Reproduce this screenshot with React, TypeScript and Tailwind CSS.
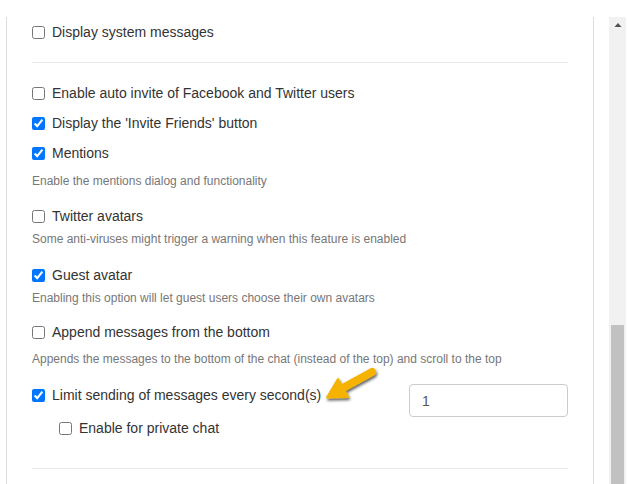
import React from "react";

function Check({ label, checked = false, className = "" }: { label: string; checked?: boolean; className?: string }) {
  return (
    <label className={`flex h-[20px] items-center gap-[7px] text-[14px] text-[#333] ${className}`}>
      <input type="checkbox" defaultChecked={checked} className="m-0 h-[13px] w-[13px] accent-[#0075ff]" />
      <span>{label}</span>
    </label>
  );
}

function Desc({ children, className = "" }: { children: React.ReactNode; className?: string }) {
  return <p className={`h-[16px] text-[12px] leading-[16px] text-[#777] ${className}`}>{children}</p>;
}

function Arrow() {
  return (
    <svg className="absolute left-[320px] top-[360px]" width="64" height="48" viewBox="0 0 64 48">
      <defs>
        <filter id="sh" x="-30%" y="-30%" width="160%" height="160%">
          <feDropShadow dx="1" dy="2" stdDeviation="1.5" floodColor="#000" floodOpacity="0.65" />
        </filter>
      </defs>
      <g filter="url(#sh)" fill="#f5b301" stroke="#f5b301">
        <line x1="21" y1="29" x2="52" y2="12" strokeWidth="8" strokeLinecap="round" />
        <polygon points="7,37.5 28,37 18,19" strokeWidth="2" strokeLinejoin="round" />
      </g>
    </svg>
  );
}

export default function App() {
  return (
    <div className="relative flex h-[484px] w-[629px] overflow-hidden bg-white font-['Liberation_Sans',Arial,sans-serif]">
      <div className="ml-[6px] mt-[17px] h-[467px] w-[588px] border-x border-[#dddddd] px-[25px]">
        <Check label="Display system messages" className="mt-[5px]" />
        <div className="mt-[20px] h-px bg-[#e8e8e8]" />

        <Check label="Enable auto invite of Facebook and Twitter users" className="mt-[20px]" />
        <Check label="Display the 'Invite Friends' button" checked className="mt-[10px]" />
        <Check label="Mentions" checked className="mt-[10px]" />
        <Desc className="mt-[10px]">Enable the mentions dialog and functionality</Desc>

        <Check label="Twitter avatars" className="mt-[17px]" />
        <Desc className="mt-[5px]">Some anti-viruses might trigger a warning when this feature is enabled</Desc>

        <Check label="Guest avatar" checked className="mt-[18px]" />
        <Desc className="mt-[5px]">Enabling this option will let guest users choose their own avatars</Desc>

        <Check label="Append messages from the bottom" className="mt-[16px]" />
        <Desc className="mt-[9px]">
          Appends the messages to the bottom of the chat (instead of the top) and scroll to the top
        </Desc>

        <div className="mt-[17px] flex items-start justify-between">
          <Check label="Limit sending of messages every second(s)" checked className="mt-[1px]" />
          <input
            type="text"
            defaultValue="1"
            className="h-[33px] w-[159px] rounded-[4px] border border-[#cccccc] px-[12px] text-[14px] text-[#555] outline-none"
          />
        </div>
        <Check label="Enable for private chat" className="mt-[1px] pl-[27px]" />

        <div className="mt-[30px] h-px bg-[#e8e8e8]" />
      </div>

      <div className="ml-[15px] mt-[17px] flex h-[467px] w-[17px] flex-col items-center bg-[#f1f1f1]">
        <svg className="mt-[5px]" width="8" height="6" viewBox="0 0 8 6">
          <polygon points="4,1 7.5,5 0.5,5" fill="#505050" />
        </svg>
        <div className="mt-[297px] w-[13px] flex-1 bg-[#c1c1c1]" />
      </div>

      <Arrow />
    </div>
  );
}
